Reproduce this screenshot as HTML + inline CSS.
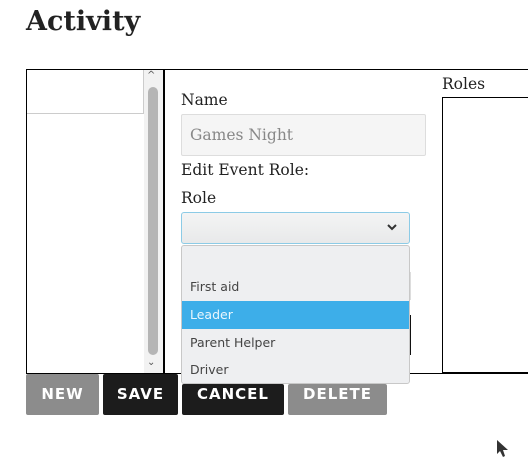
<!DOCTYPE html><html><head><style>
*{box-sizing:border-box;margin:0;padding:0}
body{width:528px;height:457px;background:#fff;position:relative;overflow:hidden;font-family:"DejaVu Serif","Liberation Serif",serif;color:#222}
.a{position:absolute}
h1{position:absolute;left:26px;top:6px;font-size:27px;font-weight:bold;font-family:"DejaVu Serif",serif;color:#222}
.lab{position:absolute;font-size:15.5px;color:#222}
.opt{position:absolute;left:0;width:228px;height:28px;font-family:"DejaVu Sans",sans-serif;font-size:12.5px;color:#444;padding-left:8px;line-height:28px}
.btn{position:absolute;top:374px;height:41px;font-family:"DejaVu Sans",sans-serif;font-weight:bold;font-size:15px;color:#fff;text-align:center;line-height:41px;letter-spacing:1px;border-radius:2px}
</style></head><body>
<h1>Activity</h1>
<div class="a" style="left:26px;top:69px;width:503px;height:305px;border:1px solid #000;border-right:none"></div>
<div class="a" style="left:27px;top:70px;width:117px;height:44px;border-right:1px solid #ccc;border-bottom:1px solid #ccc"></div>
<div class="a" style="left:144px;top:70px;width:19px;height:303px;background:#f2f2f2"></div>
<div class="a" style="left:148px;top:87px;width:10px;height:268px;background:#b5b5b5;border-radius:5px"></div>
<div class="a" style="left:147px;top:70px;font-size:10px;font-family:'DejaVu Sans',sans-serif;color:#555">^</div>
<div class="a" style="left:147px;top:357px;font-size:10px;font-family:'DejaVu Sans',sans-serif;color:#555">⌄</div>
<div class="a" style="left:163px;top:69px;width:2px;height:305px;background:#000"></div>
<div class="lab" style="left:181px;top:91px">Name</div>
<div class="a" style="left:181px;top:114px;width:245px;height:42px;background:#f5f5f5;border:1px solid #ddd;border-radius:2px;font-size:15.5px;color:#888;padding:11px 0 0 8px">Games Night</div>
<div class="lab" style="left:181px;top:161px">Edit Event Role:</div>
<div class="lab" style="left:181px;top:189px">Role</div>
<div class="a" style="left:181px;top:212px;width:229px;height:32px;background:linear-gradient(#f4f4f4,#e8e9ea);border:1px solid #8ccbe6;border-radius:3px"></div>
<svg class="a" style="left:386px;top:222px" width="12" height="10"><path d="M2 3 L6 7 L10 3" stroke="#333" stroke-width="2" fill="none"/></svg>
<div class="a" style="left:408px;top:272px;width:3px;height:28px;background:#ddd"></div>
<div class="a" style="left:408px;top:315px;width:3px;height:40px;background:#111"></div>
<div class="a" style="left:181px;top:245px;width:229px;height:139px;background:#eeeff1;border:1px solid #c8c8c8;border-radius:3px;overflow:hidden">
<div class="opt" style="top:27px">First aid</div>
<div class="opt" style="top:55px;background:#3daee9;color:#eaf6fd">Leader</div>
<div class="opt" style="top:83px">Parent Helper</div>
<div class="opt" style="top:110px">Driver</div>
</div>
<div class="lab" style="left:442px;top:75px">Roles</div>
<div class="a" style="left:442px;top:97px;width:90px;height:276px;border:1px solid #000"></div>
<div class="btn" style="left:26px;width:73px;background:#8c8c8c">NEW</div>
<div class="btn" style="left:103px;width:75px;background:#1c1c1c">SAVE</div>
<div class="btn" style="left:182px;width:102px;background:#1c1c1c;top:384px;height:31px;line-height:20px">CANCEL</div>
<div class="btn" style="left:288px;width:99px;background:#8c8c8c;top:384px;height:31px;line-height:20px">DELETE</div>
<svg class="a" style="left:496px;top:440px" width="14" height="18"><path d="M1 0 L1 14 L4 11 L7 17 L9 16 L7 10 L12 10 Z" fill="#333"/></svg>
</body></html>
